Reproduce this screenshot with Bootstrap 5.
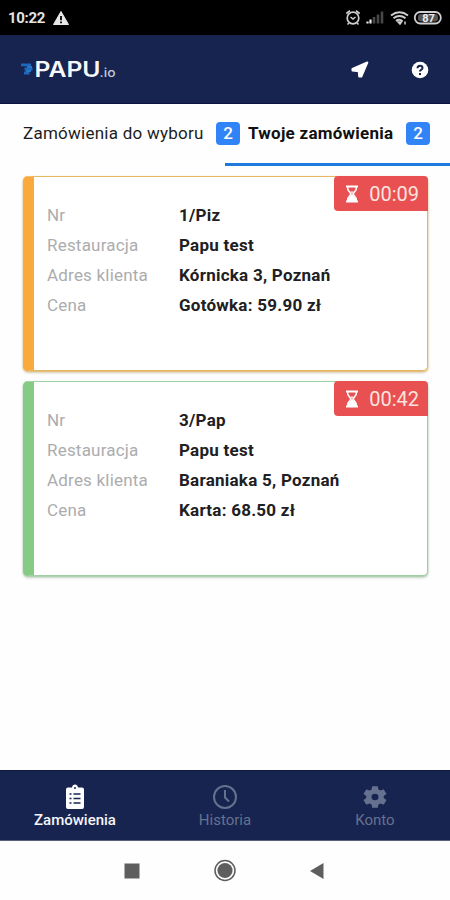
<!DOCTYPE html>
<html lang="pl">
<head>
<meta charset="utf-8">
<meta name="viewport" content="width=device-width, initial-scale=1">
<title>PAPU.io</title>
<link href="https://cdn.jsdelivr.net/npm/bootstrap@5.3.0/dist/css/bootstrap.min.css" rel="stylesheet">
<style>
body{font-family:Roboto,"Noto Sans",sans-serif;height:900px;overflow:hidden;background:#fefefe;color:#1c1c1e}
svg{display:block;flex:none}
.statusbar{height:35px;background:#000;color:#e4e4e4;padding:0 7px 0 8px;font-size:15px}
.clock{letter-spacing:-.3px;padding-top:1px}
.appbar{height:69px;background:#17244f;border-bottom:1px solid #0d1540;padding:0 21px 0 20px}
.actions{gap:42px;padding-top:2px}
.tabs{height:62px;font-size:17px}
.tab-item{height:62px;white-space:nowrap;border-bottom:3.5px solid transparent}
.tab-item.active{border-color:#1f78dc;color:#111}
.tab-a{margin-left:23px;width:193px;letter-spacing:.25px}
.tab-b{margin-left:23px;width:158px;letter-spacing:.25px}
.count{background:#3184f7;width:24px;height:23px;border-radius:4px;font-size:17px;font-weight:500;padding:0;line-height:23px}
.orders{padding:10px 22px 0 23px;gap:10px}
.order{height:195px;border:1.5px solid var(--edge);border-left:11px solid var(--bar);border-radius:5px;box-shadow:0 1px 2px var(--edge),0 2px 3px rgba(0,0,0,.15);padding:23px 0 0 13px;font-size:17px;line-height:30px;background:#fff}
.order dl{grid-template-columns:132px 1fr}
.order dt{font-weight:400;color:#acacae;letter-spacing:.2px}
.order dd{font-weight:700;margin:0;color:#202022;letter-spacing:.25px}
.amber{--bar:#faa93c;--edge:#e6b862}
.green{--bar:#86cb83;--edge:#9fcfa3}
.timer{top:-1px;right:-1px;width:94px;height:35px;background:#e85052;color:#fbe4df;border-radius:4px 4px 0 4px;font-size:20px;padding:0 9px 0 11px}
.bottombar{height:71px;background:#17244f;font-size:15px;color:#66718f;border-top:1px solid #0d1a43;border-bottom:1px solid #58617f;line-height:20px;padding-top:3px}
.bottombar .active{color:#f4f5f8;font-weight:500}
.sysnav{height:59px;padding-left:124px}
</style>
<script src="https://cdn.jsdelivr.net/npm/bootstrap@5.3.0/dist/js/bootstrap.bundle.min.js"></script>
</head>
<body class="d-flex flex-column">
<div class="statusbar d-flex align-items-center justify-content-between">
  <div class="d-flex align-items-center gap-2 fw-bold"><span class="clock">10:22</span>
    <svg width="16" height="14" viewBox="0 0 16 14"><path d="M8 .5 15.5 13.5H.5Z" fill="#e8e8e8" stroke="#e8e8e8" stroke-linejoin="round"/><path d="M8 5v4.300M8 10.500v1.800" stroke="#000" stroke-width="1.800"/></svg>
  </div>
  <svg width="100" height="18" viewBox="343 9 100 18" fill="none" stroke="#cfcfcf">
    <circle cx="353" cy="18" r="5.800" stroke-width="1.700"/><path d="M346.300 13.500 350 10.700M359.700 13.500 356 10.700M349 23l-1.500 1.500M357 23l1.500 1.500" stroke-width="1.600"/><path d="m350.500 17 2.500 2 2.500-2" stroke-width="1.500"/>
    <path d="M367.500 23.500v-2M370.500 23.500v-4" stroke="#eee" stroke-width="2.200"/><path d="M374 23.500v-6.500M378 23.500v-9M382 23.500v-12" stroke="#484848" stroke-width="2.600"/>
    <path d="M391 15.500q8.500-6.500 17 0M393.500 18.200q6-4.500 12 0M396 20.800q3.500-2.500 6.500.5" stroke-width="2"/><path d="m398 22 2 2 1.500-2zM405 21.500v3" stroke-width="1.500"/>
    <rect x="414.800" y="12" width="26" height="11.500" rx="5.500" stroke-width="1.800"/><rect x="418" y="14" width="20" height="7.500" rx="3" fill="#555" stroke="none"/><text x="428.500" y="22" text-anchor="middle" font-size="11" font-weight="700" fill="#eee" stroke="none">87</text>
  </svg>
</div>
<header class="appbar d-flex align-items-center">
  <svg width="98" height="24" viewBox="20 57 98 24">
    <path d="M21 64.800h10M24.500 69h8M24 73h5.500" stroke="#1d67bd" stroke-width="2.800"/><path d="M27 67h5M26 71h5" stroke="#2a8bdc" stroke-width="1.400"/>
    <text x="34.500" y="76.500" font-family="Inter,sans-serif" font-weight="600" font-size="21" textLength="66" lengthAdjust="spacingAndGlyphs" fill="#f7f8fb">PAPU</text>
    <text x="99.500" y="76.500" font-family="Inter,sans-serif" font-weight="500" font-size="12.500" textLength="16" lengthAdjust="spacingAndGlyphs" fill="#c3c9da">.io</text>
  </svg>
  <div class="actions d-flex align-items-center ms-auto">
    <svg width="18" height="18" viewBox="0 0 18 18"><path d="M16.300 1.500 10.300 15.500 8.200 15.500 7.800 10.300 1.500 9.400 1.500 8Z" fill="#fff" stroke="#fff" stroke-width="2" stroke-linejoin="round"/></svg>
    <svg width="18" height="18" viewBox="0 0 18 18"><circle cx="9" cy="9" r="8.300" fill="#fff"/><path d="M6.500 7.300q0-2.600 2.500-2.600t2.500 2.200q0 1.200-1.400 1.900Q9 9.400 9 10.600M9 12v2" fill="none" stroke="#17244f" stroke-width="2"/></svg>
  </div>
</header>
<nav class="tabs row g-0">
  <div class="tab-item col-6 d-flex align-items-center"><span class="tab-a flex-shrink-0">Zamówienia do wyboru</span><span class="badge count flex-shrink-0">2</span></div>
  <div class="tab-item col-6 d-flex align-items-center active fw-bold"><span class="tab-b flex-shrink-0">Twoje zamówienia</span><span class="badge count flex-shrink-0">2</span></div>
</nav>
<main class="orders d-flex flex-column flex-grow-1">
  <article class="order amber position-relative">
    <div class="timer position-absolute d-flex align-items-center justify-content-between">
      <svg width="14" height="18" viewBox="0 0 14 18"><path d="M1 1.500h12M1 16.500h12" stroke="#fff" stroke-width="2"/><path d="M2.800 2v2.500L6 9l-3.200 4.500V16h8.400v-2.500L8 9l3.200-4.500V2" fill="none" stroke="#fff" stroke-width="1.500"/><path d="M7 9 3 14v2h8v-2zM5.500 6.500h3L7 8.500z" fill="#fff"/></svg><span>00:09</span>
    </div>
    <dl class="d-grid mb-0"><dt>Nr</dt><dd>1/Piz</dd><dt>Restauracja</dt><dd>Papu test</dd><dt>Adres klienta</dt><dd>Kórnicka 3, Poznań</dd><dt>Cena</dt><dd>Gotówka: 59.90 zł</dd></dl>
  </article>
  <article class="order green position-relative">
    <div class="timer position-absolute d-flex align-items-center justify-content-between">
      <svg width="14" height="18" viewBox="0 0 14 18"><path d="M1 1.500h12M1 16.500h12" stroke="#fff" stroke-width="2"/><path d="M2.800 2v2.500L6 9l-3.200 4.500V16h8.400v-2.500L8 9l3.200-4.500V2" fill="none" stroke="#fff" stroke-width="1.500"/><path d="M7 9 3 14v2h8v-2zM5.500 6.500h3L7 8.500z" fill="#fff"/></svg><span>00:42</span>
    </div>
    <dl class="d-grid mb-0"><dt>Nr</dt><dd>3/Pap</dd><dt>Restauracja</dt><dd>Papu test</dd><dt>Adres klienta</dt><dd>Baraniaka 5, Poznań</dd><dt>Cena</dt><dd>Karta: 68.50 zł</dd></dl>
  </article>
</main>
<nav class="bottombar row g-0 text-center">
  <div class="col-4 d-flex flex-column align-items-center justify-content-center active">
    <svg width="20" height="26" viewBox="0 0 20 26"><path d="M3 3.500h4Q7.500.5 10 .5t3 3h4q2 0 2 2V23q0 2-2 2H3q-2 0-2-2V5.500q0-2 2-2Z" fill="#fff"/><circle cx="10" cy="4" r="1" fill="#17244f"/><path d="M4.500 10h2M8.500 10h7M4.500 14.500h2M8.500 14.500h7M4.500 19h2M8.500 19h7" stroke="#17244f" stroke-width="1.700"/></svg>
    <span>Zamówienia</span></div>
  <div class="col-4 d-flex flex-column align-items-center justify-content-center">
    <svg width="26" height="26" viewBox="0 0 26 26" fill="none" stroke="currentColor" stroke-width="2"><circle cx="13" cy="13" r="11"/><path d="M13 6v7.500l4 4"/></svg>
    <span>Historia</span></div>
  <div class="col-4 d-flex flex-column align-items-center justify-content-center">
    <svg width="28" height="26" viewBox="0 0 24 24" preserveAspectRatio="none" fill="currentColor"><path d="M19.430 12.980c.04-.32.070-.64.070-.98s-.03-.66-.07-.98l2.110-1.650c.19-.15.240-.42.120-.64l-2-3.460c-.12-.22-.39-.3-.61-.22l-2.490 1c-.52-.4-1.080-.73-1.690-.98l-.38-2.650C14.460 2.180 14.250 2 14 2h-4c-.25 0-.46.180-.49.420l-.38 2.650c-.61.250-1.170.590-1.690.980l-2.490-1c-.23-.09-.49 0-.61.220l-2 3.460c-.13.220-.07.490.120.640l2.110 1.650c-.04.320-.07.650-.07.980s.03.660.070.980l-2.110 1.650c-.19.150-.24.420-.12.640l2 3.460c.12.220.390.300.610.220l2.490-1c.52.400 1.080.730 1.690.980l.38 2.650c.03.240.240.420.490.420h4c.25 0 .46-.18.490-.42l.38-2.650c.61-.25 1.170-.59 1.690-.98l2.490 1c.23.090.490 0 .610-.22l2-3.460c.12-.22.070-.49-.12-.64zM12 15a3 3 0 1 1 0-6 3 3 0 0 1 0 6Z"/></svg>
    <span>Konto</span></div>
</nav>
<div class="sysnav d-flex align-items-center">
  <svg width="202" height="24" viewBox="124 859 202 24" fill="#5e5e5e"><path d="M124.500 863.500h15v15h-15zM323.500 863v16L310 871z"/><circle cx="225" cy="870.500" r="7.600"/><circle cx="225" cy="870.500" r="10" fill="none" stroke="#5e5e5e" stroke-width="1.500"/></svg>
</div>
</body>
</html>
